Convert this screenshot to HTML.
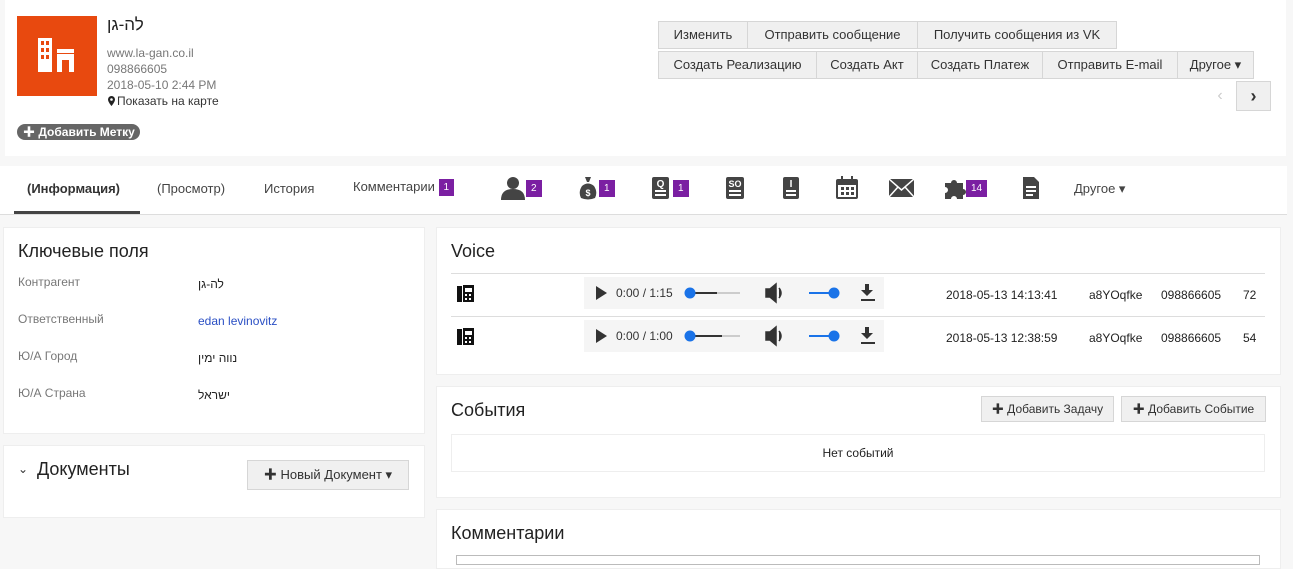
<!DOCTYPE html>
<html><head><meta charset="utf-8"><style>
*{box-sizing:border-box;margin:0;padding:0}
body{width:1293px;height:560px;background:#f7f7f7;font-family:"Liberation Sans","Noto Sans CJK SC",sans-serif;position:relative;overflow:hidden;color:#333}
.a{position:absolute}
.p{position:absolute;background:#fff;border:1px solid #eee}
.btn{position:absolute;background:#f0f0f0;border:1px solid #d6d6d6;font-size:13px;color:#333;text-align:center;line-height:26px;height:28px}
.badge{display:inline-block;background:#7b1fa2;color:#fff;font-size:10px;line-height:17px;height:17px;padding:0 5px;vertical-align:middle}
.tab{position:absolute;top:181px;font-size:13px;color:#444}
.lbl{position:absolute;left:18px;font-size:12px;color:#777}
.val{position:absolute;left:198px;font-size:12px;color:#222}
.ic{position:absolute;top:176px}
</style></head><body>
<div class="p" style="left:5px;top:0;width:1281px;height:156px;border:none"></div>
<div class="a" style="left:17px;top:16px;width:80px;height:80px;background:#e8490f"></div>
<svg class="a" style="left:38px;top:38px" width="38" height="36" viewBox="0 0 38 36"><rect x="0" y="0" width="14" height="34" fill="#fff"/><g fill="#e8490f"><rect x="3" y="3" width="3" height="4"/><rect x="8" y="3" width="3" height="4"/><rect x="3" y="10" width="3" height="4"/><rect x="8" y="10" width="3" height="4"/><rect x="3" y="17" width="3" height="4"/><rect x="8" y="17" width="3" height="4"/></g><rect x="19" y="11" width="17" height="4" fill="#fff"/><rect x="19" y="16" width="17" height="18" fill="#fff"/><rect x="24" y="22" width="7" height="12" fill="#e8490f"/></svg>
<div class="a" style="left:107px;top:15px;font-size:17px;color:#222">לה-גן</div>
<div class="a" style="left:107px;top:45px;font-size:12px;color:#777;line-height:16px">www.la-gan.co.il<br>098866605<br>2018-05-10 2:44 PM</div>
<svg class="a" style="left:108px;top:96px" width="7" height="10"><path d="M3.5 0a3.5 3.5 0 0 1 3.5 3.5C7 6 3.5 10 3.5 10S0 6 0 3.5A3.5 3.5 0 0 1 3.5 0z" fill="#222"/><circle cx="3.5" cy="3.5" r="1.3" fill="#fff"/></svg>
<div class="a" style="left:117px;top:94px;font-size:12px;color:#333">Показать на карте</div>
<div class="a" style="left:17px;top:124px;width:123px;height:16px;background:#666;border-radius:8px;color:#fff;font-size:12px;font-weight:bold;line-height:16px;padding-left:6px">✚ Добавить Метку</div>

<div class="btn" style="left:658px;top:21px;width:90px">Изменить</div>
<div class="btn" style="left:747px;top:21px;width:171px">Отправить сообщение</div>
<div class="btn" style="left:917px;top:21px;width:200px">Получить сообщения из VK</div>
<div class="btn" style="left:658px;top:51px;width:159px">Создать Реализацию</div>
<div class="btn" style="left:816px;top:51px;width:102px">Создать Акт</div>
<div class="btn" style="left:917px;top:51px;width:126px">Создать Платеж</div>
<div class="btn" style="left:1042px;top:51px;width:136px">Отправить E-mail</div>
<div class="btn" style="left:1177px;top:51px;width:77px">Другое ▾</div>
<div class="a" style="left:1203px;top:81px;width:34px;height:30px;color:#ccc;text-align:center;line-height:30px;font-size:16px">‹</div>
<div class="btn" style="left:1236px;top:81px;width:35px;height:30px;background:#f0f0f0;font-weight:bold;font-size:18px;line-height:28px">›</div>

<div class="p" style="left:0;top:166px;width:1287px;height:49px;border:none;border-bottom:1px solid #ddd"></div>
<div class="tab" style="left:27px;font-weight:bold;color:#333">(Информация)</div>
<div class="a" style="left:14px;top:211px;width:126px;height:3px;background:#444"></div>
<div class="tab" style="left:157px">(Просмотр)</div>
<div class="tab" style="left:264px">История</div>
<div class="tab" style="left:353px;top:179px">Комментарии <span class="badge">1</span></div>
<svg class="ic" style="left:500px" width="26" height="24"><circle cx="13" cy="7" r="6" fill="#444"/><path d="M1 24 Q1 13 13 13 Q25 13 25 24Z" fill="#444"/></svg><span class="a badge" style="left:526px;top:180px">2</span>
<svg class="ic" style="left:578px" width="20" height="24"><path d="M7 1h6l-2 5h-2z M4 10 Q10 5 16 10 Q20 16 17 22 Q10 25 3 22 Q0 16 4 10Z" fill="#444"/><text x="10" y="20" font-size="9" fill="#fff" text-anchor="middle" font-family="Liberation Sans" font-weight="bold">$</text></svg><span class="a badge" style="left:599px;top:180px">1</span>
<svg class="ic" style="left:651px" width="20" height="24"><rect x="1" y="1" width="17" height="22" rx="2" fill="#444"/><text x="9.5" y="11" font-size="10" fill="#fff" text-anchor="middle" font-family="Liberation Sans" font-weight="bold">Q</text><rect x="4" y="14" width="11" height="2" fill="#fff"/><rect x="4" y="18" width="11" height="2" fill="#fff"/></svg><span class="a badge" style="left:673px;top:180px">1</span>
<svg class="ic" style="left:725px" width="20" height="24"><rect x="1" y="1" width="18" height="22" rx="2" fill="#444"/><text x="10" y="11" font-size="9" fill="#fff" text-anchor="middle" font-family="Liberation Sans" font-weight="bold">SO</text><rect x="4" y="14" width="12" height="2" fill="#fff"/><rect x="4" y="18" width="12" height="2" fill="#fff"/></svg>
<svg class="ic" style="left:782px" width="18" height="24"><rect x="1" y="1" width="16" height="22" rx="2" fill="#444"/><text x="9" y="11" font-size="10" fill="#fff" text-anchor="middle" font-family="Liberation Sans" font-weight="bold">I</text><rect x="4" y="14" width="10" height="2" fill="#fff"/><rect x="4" y="18" width="10" height="2" fill="#fff"/></svg>
<svg class="ic" style="left:835px" width="24" height="24"><rect x="1" y="3" width="22" height="20" rx="2" fill="#444"/><rect x="3" y="9" width="18" height="12" fill="#fff"/><rect x="6" y="0" width="2" height="5" fill="#444"/><rect x="16" y="0" width="2" height="5" fill="#444"/><g fill="#444"><rect x="6" y="11" width="3" height="3"/><rect x="11" y="11" width="3" height="3"/><rect x="16" y="11" width="3" height="3"/><rect x="6" y="16" width="3" height="3"/><rect x="11" y="16" width="3" height="3"/><rect x="16" y="16" width="3" height="3"/></g></svg>
<svg class="ic" style="left:889px;top:179px" width="25" height="18"><rect x="0" y="0" width="25" height="18" fill="#444"/><path d="M0 0 L12.5 11 L25 0 M0 18 L9 8 M25 18 L16 8" stroke="#fff" stroke-width="1.5" fill="none"/></svg>
<svg class="ic" style="left:943px" width="24" height="24"><path d="M2 7h6a3 3 0 1 1 6 0h6v6a3 3 0 1 1 0 6v4h-6a3 3 0 1 0-6 0H2v-6a3 3 0 1 0 0-6z" fill="#444"/></svg><span class="a badge" style="left:966px;top:180px">14</span>
<svg class="ic" style="left:1022px" width="18" height="24"><path d="M1 1h11l5 5v17H1z" fill="#444"/><rect x="4" y="10" width="10" height="2" fill="#fff"/><rect x="4" y="14" width="10" height="2" fill="#fff"/><rect x="4" y="18" width="7" height="2" fill="#fff"/></svg>
<div class="tab" style="left:1074px">Другое ▾</div>

<div class="p" style="left:3px;top:227px;width:422px;height:207px"></div>
<div class="a" style="left:18px;top:241px;font-size:18px;color:#222">Ключевые поля</div>
<div class="lbl" style="top:275px">Контрагент</div><div class="val" style="top:277px">לה-גן</div>
<div class="lbl" style="top:312px">Ответственный</div><div class="val" style="top:314px;color:#2a4fc4">edan levinovitz</div>
<div class="lbl" style="top:349px">Ю/А Город</div><div class="val" style="top:351px">נווה ימין</div>
<div class="lbl" style="top:386px">Ю/А Страна</div><div class="val" style="top:388px">ישראל</div>

<div class="p" style="left:3px;top:445px;width:422px;height:73px"></div>
<div class="a" style="left:18px;top:462px;font-size:12px;color:#333">⌄</div>
<div class="a" style="left:37px;top:459px;font-size:18px;color:#222">Документы</div>
<div class="btn" style="left:247px;top:460px;width:162px;height:30px;line-height:28px;font-size:13px">✚ Новый Документ ▾</div>

<div class="p" style="left:436px;top:227px;width:845px;height:148px"></div>
<div class="a" style="left:451px;top:241px;font-size:18px;color:#222">Voice</div>
<div class="a" style="left:451px;top:273px;width:814px;height:1px;background:#ddd"></div>
<div class="a" style="left:451px;top:316px;width:814px;height:1px;background:#ddd"></div>
<div class="a" style="left:455px;top:283px;width:20px;height:20px"><svg width="20" height="20"><rect x="2" y="3" width="5" height="16" fill="#111"/><rect x="8" y="2" width="11" height="17" fill="#111"/><rect x="10" y="5" width="7" height="4" fill="#fff"/><g fill="#fff"><rect x="10" y="11" width="2" height="2"/><rect x="14" y="11" width="2" height="2"/><rect x="10" y="15" width="2" height="2"/><rect x="14" y="15" width="2" height="2"/></g></svg></div>
<div class="a" style="left:455px;top:326px;width:20px;height:20px"><svg width="20" height="20"><rect x="2" y="3" width="5" height="16" fill="#111"/><rect x="8" y="2" width="11" height="17" fill="#111"/><rect x="10" y="5" width="7" height="4" fill="#fff"/><g fill="#fff"><rect x="10" y="11" width="2" height="2"/><rect x="14" y="11" width="2" height="2"/><rect x="10" y="15" width="2" height="2"/><rect x="14" y="15" width="2" height="2"/></g></svg></div>

<div class="a" style="left:584px;top:277px;width:300px;height:32px;background:#f5f5f5"></div>
<div class="a" style="left:584px;top:320px;width:300px;height:32px;background:#f5f5f5"></div>
<svg class="a" style="left:584px;top:277px" width="300" height="75"><g>
<path d="M12 9l11 7-11 7z" fill="#333"/>
<text x="32" y="20" font-size="12" fill="#333" font-family="Liberation Sans">0:00 / 1:15</text>
<rect x="106" y="15" width="50" height="2" fill="#ccc"/><rect x="106" y="15" width="27" height="2" fill="#333"/><circle cx="106" cy="16" r="5.5" fill="#1a73e8"/>
<path d="M182 12h4l6-5v18l-6-5h-4z M195 11q4 5 0 10" fill="#333" stroke="#333" stroke-width="1.5"/>
<rect x="225" y="15" width="25" height="2" fill="#1a73e8"/><circle cx="250" cy="16" r="5.5" fill="#1a73e8"/>
<path d="M281 7h4v6h4l-6 6-6-6h4z" fill="#333"/><rect x="277" y="22" width="14" height="2" fill="#333"/></g>
<g transform="translate(0,43)">
<path d="M12 9l11 7-11 7z" fill="#333"/>
<text x="32" y="20" font-size="12" fill="#333" font-family="Liberation Sans">0:00 / 1:00</text>
<rect x="106" y="15" width="50" height="2" fill="#ccc"/><rect x="106" y="15" width="32" height="2" fill="#333"/><circle cx="106" cy="16" r="5.5" fill="#1a73e8"/>
<path d="M182 12h4l6-5v18l-6-5h-4z M195 11q4 5 0 10" fill="#333" stroke="#333" stroke-width="1.5"/>
<rect x="225" y="15" width="25" height="2" fill="#1a73e8"/><circle cx="250" cy="16" r="5.5" fill="#1a73e8"/>
<path d="M281 7h4v6h4l-6 6-6-6h4z" fill="#333"/><rect x="277" y="22" width="14" height="2" fill="#333"/></g></svg>
<div class="a" style="left:946px;top:288px;font-size:12px;color:#222">2018-05-13 14:13:41</div>
<div class="a" style="left:1089px;top:288px;font-size:12px;color:#222">a8YOqfke</div>
<div class="a" style="left:1161px;top:288px;font-size:12px;color:#222">098866605</div>
<div class="a" style="left:1243px;top:288px;font-size:12px;color:#222">72</div>
<div class="a" style="left:946px;top:331px;font-size:12px;color:#222">2018-05-13 12:38:59</div>
<div class="a" style="left:1089px;top:331px;font-size:12px;color:#222">a8YOqfke</div>
<div class="a" style="left:1161px;top:331px;font-size:12px;color:#222">098866605</div>
<div class="a" style="left:1243px;top:331px;font-size:12px;color:#222">54</div>

<div class="p" style="left:436px;top:386px;width:845px;height:112px"></div>
<div class="a" style="left:451px;top:400px;font-size:18px;color:#222">События</div>
<div class="btn" style="left:981px;top:396px;width:133px;height:26px;line-height:24px;font-size:12px">✚ Добавить Задачу</div>
<div class="btn" style="left:1121px;top:396px;width:145px;height:26px;line-height:24px;font-size:12px">✚ Добавить Событие</div>
<div class="a" style="left:451px;top:434px;width:814px;height:38px;border:1px solid #eee;text-align:center;line-height:36px;font-size:12px;color:#222">Нет событий</div>

<div class="p" style="left:436px;top:509px;width:845px;height:60px"></div>
<div class="a" style="left:451px;top:523px;font-size:18px;color:#222">Комментарии</div>
<div class="a" style="left:456px;top:555px;width:804px;height:10px;border:1px solid #bbb"></div>
</body></html>
